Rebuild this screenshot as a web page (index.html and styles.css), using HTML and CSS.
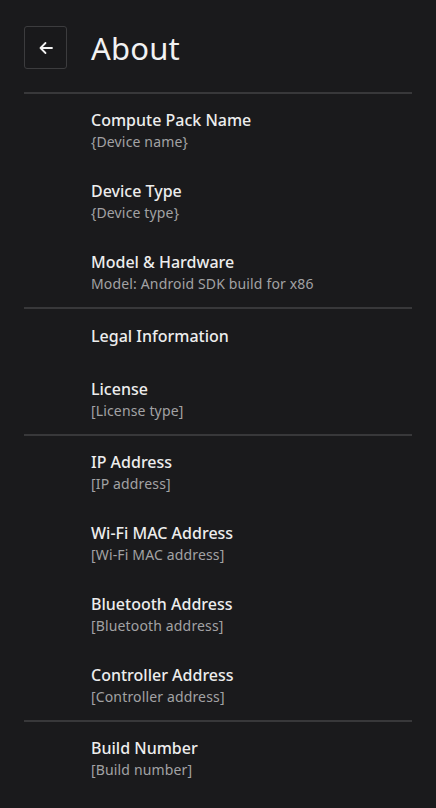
FILE: index.html
```html
<!DOCTYPE html>
<html>
<head>
<meta charset="utf-8">
<link rel="stylesheet" href="styles.css">
</head>
<body>
<div class="page">
  <header class="header">
    <button class="back" aria-label="Back">
      <svg width="18" height="18" viewBox="0 0 18 18"><path d="M15 9H3.5M8.5 4L3.5 9L8.5 14" fill="none" stroke="#f2f2f2" stroke-width="1.8" stroke-linecap="round" stroke-linejoin="round"/></svg>
    </button>
    <h1 class="title">About</h1>
  </header>
  <div class="divider"></div>
  <section class="group">
    <div class="item"><div class="label">Compute Pack Name</div><div class="value">{Device name}</div></div>
    <div class="item"><div class="label">Device Type</div><div class="value">{Device type}</div></div>
    <div class="item"><div class="label">Model &amp; Hardware</div><div class="value">Model: Android SDK build for x86</div></div>
  </section>
  <div class="divider"></div>
  <section class="group">
    <div class="item single"><div class="label">Legal Information</div></div>
    <div class="item"><div class="label">License</div><div class="value">[License type]</div></div>
  </section>
  <div class="divider"></div>
  <section class="group">
    <div class="item"><div class="label">IP Address</div><div class="value">[IP address]</div></div>
    <div class="item"><div class="label">Wi-Fi MAC Address</div><div class="value">[Wi-Fi MAC address]</div></div>
    <div class="item"><div class="label">Bluetooth Address</div><div class="value">[Bluetooth address]</div></div>
    <div class="item"><div class="label">Controller Address</div><div class="value">[Controller address]</div></div>
  </section>
  <div class="divider"></div>
  <section class="group">
    <div class="item"><div class="label">Build Number</div><div class="value">[Build number]</div></div>
  </section>
</div>
</body>
</html>
```
FILE: styles.css
```css
html, body {
  margin: 0;
  padding: 0;
  background: #1a1a1c;
}
body {
  font-family: "Noto Sans", "Open Sans", sans-serif;
  color: #ececec;
  height: 808px;
  overflow: hidden;
}
.page {
  padding: 26px 24px 0 24px;
  width: 388px;
}
.header {
  display: flex;
  align-items: center;
  gap: 24px;
  height: 43px;
  margin-bottom: 23px;
}
.back {
  width: 43px;
  height: 43px;
  box-sizing: border-box;
  border: 1.5px solid #3c3c3e;
  border-radius: 3px;
  background: #19191b;
  display: flex;
  align-items: center;
  justify-content: center;
  padding: 0;
}
.title {
  margin: 0;
  font-size: 31px;
  font-weight: 400;
  color: #f2f2f2;
  letter-spacing: 0.2px;
  line-height: 43px;
  padding-top: 2px;
}
.divider {
  height: 2px;
  background: #38383a;
}
.group {
  display: flex;
  flex-direction: column;
}
.item {
  padding: 15px 0 13px 67px;
  display: flex;
  flex-direction: column;
}
.item.single {
  padding-top: 16px;
  padding-bottom: 16px;
}
.label {
  font-size: 16px;
  line-height: 22px;
  font-weight: 500;
  color: #ededed;
}
.value {
  font-size: 14px;
  line-height: 21px;
  color: #a2a2a4;
  letter-spacing: 0.15px;
}
```
